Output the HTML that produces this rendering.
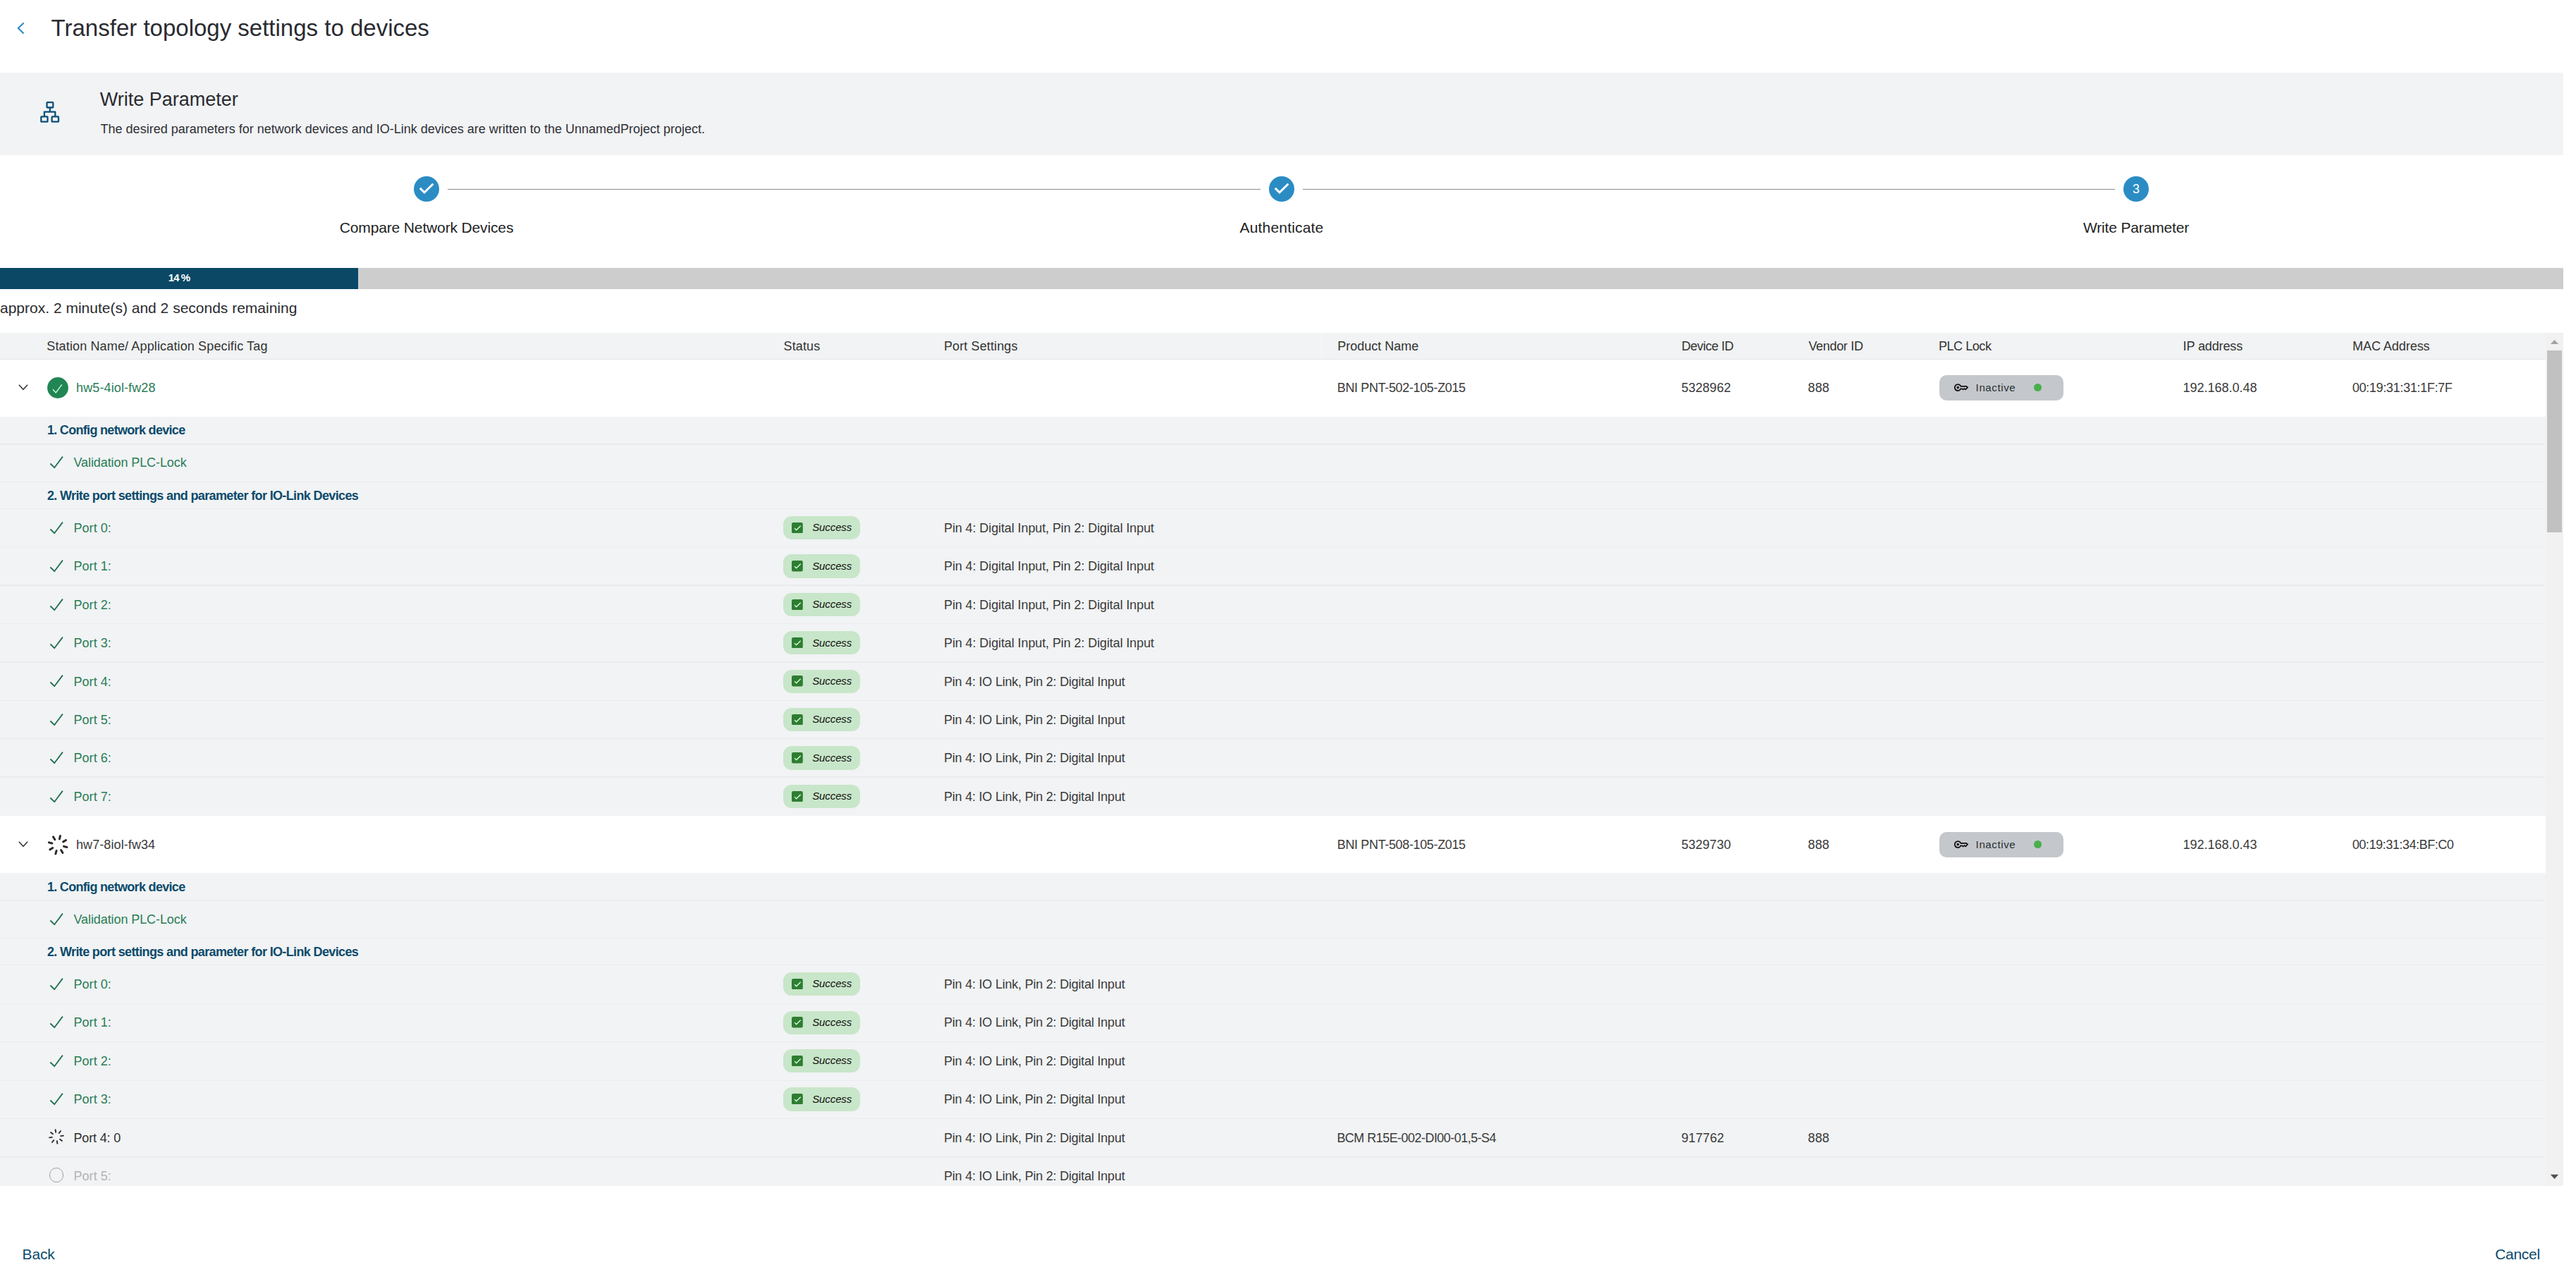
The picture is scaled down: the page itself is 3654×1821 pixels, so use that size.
<!DOCTYPE html>
<html lang="en"><head><meta charset="utf-8"><title>Transfer topology settings to devices</title>
<style>
html,body{margin:0;padding:0;background:#fff}
body{width:3654px;height:1821px;position:relative;overflow:hidden;font-family:"Liberation Sans", sans-serif;color:#333}
.a{position:absolute;display:block}
.t{position:absolute;white-space:nowrap;display:block}
.sep{left:0;width:3609px;height:1.4px;background:#e9ebee}
.plc{width:176px;height:36px;border-radius:10px;background:#c4c8cc}
.dot{width:11px;height:11px;border-radius:50%;background:#48b04c}
.suc{width:108.5px;height:33.3px;border-radius:12px;background:#c8e6c9}
.radio{width:20.6px;height:20.6px;border-radius:50%;border:1.3px solid #a0a0a0;box-sizing:border-box}
</style></head>
<body>
<svg class="a" style="left:18.7px;top:28px" width="24" height="24" viewBox="0 0 24 24"><path d="M14.6 4.4 L6.8 12 L14.6 19.6" fill="none" stroke="#2b8cc4" stroke-width="2.1"/></svg>
<span class="t" style="top:18.10px;height:44px;line-height:44px;font-size:33px;color:#2a2b31;left:72.60px;">Transfer topology settings to devices</span>
<div class="a" style="left:0;top:103px;width:3636px;height:117px;background:#f1f3f4"></div>
<svg class="a" style="left:55px;top:142px" width="32" height="34" viewBox="55 142 32 34"><g fill="none" stroke="#0b4f78" stroke-width="2.3" stroke-linejoin="round"><rect x="66.5" y="145.1" width="8.8" height="7.4" rx="0.8"/><rect x="58.3" y="165.4" width="9.2" height="7.3" rx="0.8"/><rect x="73.6" y="165.4" width="9.4" height="7.3" rx="0.8"/><path d="M70.9 152.5 V158.6 M62.9 165.4 V158.6 H78.3 V165.4"/></g></svg>
<span class="t" style="top:122.90px;height:36px;line-height:36px;font-size:27px;color:#2a2b31;left:141.80px;">Write Parameter</span>
<span class="t" style="top:168.10px;height:30px;line-height:30px;font-size:18px;color:#2f3036;left:142.60px;">The desired parameters for network devices and IO-Link devices are written to the UnnamedProject project.</span>
<div class="a" style="left:635px;top:267.6px;width:1153px;height:1.5px;background:#8c8c8c"></div>
<div class="a" style="left:1848px;top:267.6px;width:1152px;height:1.5px;background:#8c8c8c"></div>
<div class="a" style="left:587px;top:250px;width:36px;height:36px;border-radius:50%;background:#2b8cc4"></div>
<svg class="a" style="left:593px;top:256px" width="24" height="24" viewBox="0 0 24 24"><path d="M2.8 10.9 L9 17 L21.35 4.8" fill="none" stroke="#fff" stroke-width="3"/></svg>
<span class="t" style="top:307.60px;height:30px;line-height:30px;font-size:21px;letter-spacing:-0.139px;color:#1e1f24;left:205.00px;width:800px;text-align:center;">Compare Network Devices</span>
<div class="a" style="left:1800px;top:250px;width:36px;height:36px;border-radius:50%;background:#2b8cc4"></div>
<svg class="a" style="left:1806px;top:256px" width="24" height="24" viewBox="0 0 24 24"><path d="M2.8 10.9 L9 17 L21.35 4.8" fill="none" stroke="#fff" stroke-width="3"/></svg>
<span class="t" style="top:307.60px;height:30px;line-height:30px;font-size:21px;letter-spacing:0.176px;color:#1e1f24;left:1418.00px;width:800px;text-align:center;">Authenticate</span>
<div class="a" style="left:3012px;top:250px;width:36px;height:36px;border-radius:50%;background:#2b8cc4"></div>
<span class="t" style="top:252.80px;height:30px;line-height:30px;font-size:18px;color:#fff;left:2630.00px;width:800px;text-align:center;">3</span>
<span class="t" style="top:307.60px;height:30px;line-height:30px;font-size:21px;letter-spacing:-0.164px;color:#1e1f24;left:2630.00px;width:800px;text-align:center;">Write Parameter</span>
<div class="a" style="left:0;top:380px;width:3636px;height:30px;background:#cdcdcd"></div>
<div class="a" style="left:0;top:380px;width:508px;height:30px;background:#0a4866"></div>
<span class="t" style="top:379.40px;height:30px;line-height:30px;font-size:15px;font-weight:bold;letter-spacing:-0.901px;color:#fff;left:-146.00px;width:800px;text-align:center;">14 %</span>
<span class="t" style="top:421.80px;height:30px;line-height:30px;font-size:21px;color:#2a2b31;left:0.00px;">approx. 2 minute(s) and 2 seconds remaining</span>
<span class="t" style="top:1763.80px;height:30px;line-height:30px;font-size:21px;letter-spacing:-0.196px;color:#0b4a6b;left:31.60px;">Back</span>
<span class="t" style="top:1763.80px;height:30px;line-height:30px;font-size:21px;letter-spacing:-0.295px;color:#0b4a6b;left:3539.20px;">Cancel</span>
<div class="a" style="left:0;top:472px;width:3636px;height:1210px;background:#f1f3f4;overflow:hidden" id="tbl">
<div class="a" style="left:0;top:-472px;width:3636px;height:1821px">
<span class="t" style="top:475.80px;height:30px;line-height:30px;font-size:18px;letter-spacing:0.142px;color:#333;left:66.30px;">Station Name/ Application Specific Tag</span>
<span class="t" style="top:475.80px;height:30px;line-height:30px;font-size:18px;letter-spacing:0.114px;color:#333;left:1111.60px;">Status</span>
<span class="t" style="top:475.80px;height:30px;line-height:30px;font-size:18px;letter-spacing:0.111px;color:#333;left:1339.00px;">Port Settings</span>
<span class="t" style="top:475.80px;height:30px;line-height:30px;font-size:18px;letter-spacing:0.013px;color:#333;left:1897.20px;">Product Name</span>
<span class="t" style="top:475.80px;height:30px;line-height:30px;font-size:18px;letter-spacing:-0.491px;color:#333;left:2385.20px;">Device ID</span>
<span class="t" style="top:475.80px;height:30px;line-height:30px;font-size:18px;letter-spacing:-0.32px;color:#333;left:2565.40px;">Vendor ID</span>
<span class="t" style="top:475.80px;height:30px;line-height:30px;font-size:18px;letter-spacing:-0.45px;color:#333;left:2750.00px;">PLC Lock</span>
<span class="t" style="top:475.80px;height:30px;line-height:30px;font-size:18px;letter-spacing:-0.126px;color:#333;left:3096.60px;">IP address</span>
<span class="t" style="top:475.80px;height:30px;line-height:30px;font-size:18px;letter-spacing:-0.045px;color:#333;left:3337.00px;">MAC Address</span>
<div class="a" style="left:0;top:509.00px;width:3612px;height:1.5px;background:#e4e6e9"></div>
<div class="a" style="left:1873.5px;top:472.00px;width:1.5px;height:37px;background:#fafbfb"></div>
<div class="a" style="left:0;top:510.00px;width:3612px;height:81.00px;background:#fff"></div>
<svg class="a" style="left:23.10px;top:539.30px" width="20" height="20" viewBox="-10 -10 20 20"><path d="M-6.1 -3.2 L0 3.4 L6.1 -3.2" fill="none" stroke="#3a3a3a" stroke-width="1.6"/></svg>
<svg class="a" style="left:66px;top:533.90px" width="32" height="32" viewBox="-16 -16 32 32"><circle r="14.9" fill="#218654"/><path d="M-7.05 2.3 L-2.8 7 L5.8 -4.7" fill="none" stroke="#c9ffe4" stroke-width="1.4"/></svg>
<span class="t" style="top:534.60px;height:30px;line-height:30px;font-size:18px;letter-spacing:0.12px;color:#2a7d57;left:108.00px;">hw5-4iol-fw28</span>
<span class="t" style="top:534.60px;height:30px;line-height:30px;font-size:18px;letter-spacing:-0.358px;color:#3a3a3a;left:1896.80px;">BNI PNT-502-105-Z015</span>
<span class="t" style="top:534.60px;height:30px;line-height:30px;font-size:18px;letter-spacing:0.02px;color:#3a3a3a;left:2385.00px;">5328962</span>
<span class="t" style="top:534.60px;height:30px;line-height:30px;font-size:18px;letter-spacing:0.077px;color:#3a3a3a;left:2564.60px;">888</span>
<div class="a plc" style="left:2751px;top:532.00px"></div>
<svg class="a" style="left:2770.61px;top:539.38px" width="23.24" height="21.24" viewBox="0 0 26.260 24"><path d="M7 14q-.825 0-1.412-.587Q5 12.825 5 12t.588-1.413Q6.175 10 7 10t1.412.587Q9 11.175 9 12q0 .825-.588 1.413Q7.825 14 7 14Zm0 4q-2.5 0-4.25-1.75T1 12q0-2.5 1.75-4.25T7 6q1.675 0 3.038.825Q11.4 7.65 12.2 9H21l3 3-4.5 4.5-2-1.5-2 1.5L13.375 15H12.2q-.8 1.35-2.162 2.175Q8.675 18 7 18Zm0-2q1.4 0 2.463-.85Q10.525 14.3 10.875 13H14l1.45 1.025L17.5 12.5l1.775 1.375L21.15 12l-1-1h-9.275q-.35-1.3-1.412-2.15Q8.4 8 7 8 5.35 8 4.175 9.175 3 10.35 3 12q0 1.65 1.175 2.825Q5.35 16 7 16Z" fill="#111"/></svg>
<span class="t" style="top:534.70px;height:30px;line-height:30px;font-size:15px;letter-spacing:0.614px;color:#2a2e33;left:2802.60px;">Inactive</span>
<div class="a dot" style="left:2884.80px;top:544.30px"></div>
<span class="t" style="top:534.60px;height:30px;line-height:30px;font-size:18px;letter-spacing:-0.001px;color:#3a3a3a;left:3096.40px;">192.168.0.48</span>
<span class="t" style="top:534.60px;height:30px;line-height:30px;font-size:18px;letter-spacing:-0.313px;color:#3a3a3a;left:3336.70px;">00:19:31:31:1F:7F</span>
<span class="t" style="top:594.50px;height:30px;line-height:30px;font-size:18px;font-weight:bold;letter-spacing:-0.685px;color:#0b4a6b;left:66.90px;">1. Config network device</span>
<div class="a sep" style="top:629.20px"></div>
<svg class="a" style="left:68.00px;top:643.60px" width="24" height="24" viewBox="-12 -12 24 24"><path d="M-8.6 1.5 L-2.8 7.2 L8.9 -8.4" fill="none" stroke="#1f6e4c" stroke-width="1.8" stroke-linejoin="miter"/></svg>
<span class="t" style="top:640.85px;height:30px;line-height:30px;font-size:18px;letter-spacing:-0.087px;color:#2a7d57;left:104.50px;">Validation PLC-Lock</span>
<div class="a sep" style="top:682.90px"></div>
<span class="t" style="top:687.80px;height:30px;line-height:30px;font-size:18px;font-weight:bold;letter-spacing:-0.634px;color:#0b4a6b;left:66.90px;">2. Write port settings and parameter for IO-Link Devices</span>
<div class="a sep" style="top:721.10px"></div>
<svg class="a" style="left:68.00px;top:736.70px" width="24" height="24" viewBox="-12 -12 24 24"><path d="M-8.6 1.5 L-2.8 7.2 L8.9 -8.4" fill="none" stroke="#1f6e4c" stroke-width="1.8" stroke-linejoin="miter"/></svg>
<span class="t" style="top:733.95px;height:30px;line-height:30px;font-size:18px;letter-spacing:0.045px;color:#2a7d57;left:104.50px;">Port 0:</span>
<div class="a suc" style="left:1111px;top:732.00px"></div>
<svg class="a" style="left:1123.3px;top:740.80px" width="15.8" height="15.4" viewBox="0 0 15.8 15.4"><rect width="15.8" height="15.4" rx="2.2" fill="#2e7d32"/><path d="M4.1 8.1 L6.6 10.8 L12.7 4.8" fill="none" stroke="#d6ffdc" stroke-width="1.35"/></svg>
<span class="t" style="top:733.30px;height:30px;line-height:30px;font-size:15px;font-style:italic;letter-spacing:-0.101px;color:#111;left:1152.20px;">Success</span>
<span class="t" style="top:733.95px;height:30px;line-height:30px;font-size:18px;letter-spacing:-0.099px;color:#3a3a3a;left:1339.00px;">Pin 4: Digital Input, Pin 2: Digital Input</span>
<div class="a sep" style="top:775.00px"></div>
<svg class="a" style="left:68.00px;top:791.10px" width="24" height="24" viewBox="-12 -12 24 24"><path d="M-8.6 1.5 L-2.8 7.2 L8.9 -8.4" fill="none" stroke="#1f6e4c" stroke-width="1.8" stroke-linejoin="miter"/></svg>
<span class="t" style="top:788.35px;height:30px;line-height:30px;font-size:18px;letter-spacing:0.045px;color:#2a7d57;left:104.50px;">Port 1:</span>
<div class="a suc" style="left:1111px;top:786.40px"></div>
<svg class="a" style="left:1123.3px;top:795.20px" width="15.8" height="15.4" viewBox="0 0 15.8 15.4"><rect width="15.8" height="15.4" rx="2.2" fill="#2e7d32"/><path d="M4.1 8.1 L6.6 10.8 L12.7 4.8" fill="none" stroke="#d6ffdc" stroke-width="1.35"/></svg>
<span class="t" style="top:787.70px;height:30px;line-height:30px;font-size:15px;font-style:italic;letter-spacing:-0.101px;color:#111;left:1152.20px;">Success</span>
<span class="t" style="top:788.35px;height:30px;line-height:30px;font-size:18px;letter-spacing:-0.099px;color:#3a3a3a;left:1339.00px;">Pin 4: Digital Input, Pin 2: Digital Input</span>
<div class="a sep" style="top:829.40px"></div>
<svg class="a" style="left:68.00px;top:845.50px" width="24" height="24" viewBox="-12 -12 24 24"><path d="M-8.6 1.5 L-2.8 7.2 L8.9 -8.4" fill="none" stroke="#1f6e4c" stroke-width="1.8" stroke-linejoin="miter"/></svg>
<span class="t" style="top:842.75px;height:30px;line-height:30px;font-size:18px;letter-spacing:0.045px;color:#2a7d57;left:104.50px;">Port 2:</span>
<div class="a suc" style="left:1111px;top:840.80px"></div>
<svg class="a" style="left:1123.3px;top:849.60px" width="15.8" height="15.4" viewBox="0 0 15.8 15.4"><rect width="15.8" height="15.4" rx="2.2" fill="#2e7d32"/><path d="M4.1 8.1 L6.6 10.8 L12.7 4.8" fill="none" stroke="#d6ffdc" stroke-width="1.35"/></svg>
<span class="t" style="top:842.10px;height:30px;line-height:30px;font-size:15px;font-style:italic;letter-spacing:-0.101px;color:#111;left:1152.20px;">Success</span>
<span class="t" style="top:842.75px;height:30px;line-height:30px;font-size:18px;letter-spacing:-0.099px;color:#3a3a3a;left:1339.00px;">Pin 4: Digital Input, Pin 2: Digital Input</span>
<div class="a sep" style="top:883.80px"></div>
<svg class="a" style="left:68.00px;top:899.90px" width="24" height="24" viewBox="-12 -12 24 24"><path d="M-8.6 1.5 L-2.8 7.2 L8.9 -8.4" fill="none" stroke="#1f6e4c" stroke-width="1.8" stroke-linejoin="miter"/></svg>
<span class="t" style="top:897.15px;height:30px;line-height:30px;font-size:18px;letter-spacing:0.045px;color:#2a7d57;left:104.50px;">Port 3:</span>
<div class="a suc" style="left:1111px;top:895.20px"></div>
<svg class="a" style="left:1123.3px;top:904.00px" width="15.8" height="15.4" viewBox="0 0 15.8 15.4"><rect width="15.8" height="15.4" rx="2.2" fill="#2e7d32"/><path d="M4.1 8.1 L6.6 10.8 L12.7 4.8" fill="none" stroke="#d6ffdc" stroke-width="1.35"/></svg>
<span class="t" style="top:896.50px;height:30px;line-height:30px;font-size:15px;font-style:italic;letter-spacing:-0.101px;color:#111;left:1152.20px;">Success</span>
<span class="t" style="top:897.15px;height:30px;line-height:30px;font-size:18px;letter-spacing:-0.099px;color:#3a3a3a;left:1339.00px;">Pin 4: Digital Input, Pin 2: Digital Input</span>
<div class="a sep" style="top:938.20px"></div>
<svg class="a" style="left:68.00px;top:954.30px" width="24" height="24" viewBox="-12 -12 24 24"><path d="M-8.6 1.5 L-2.8 7.2 L8.9 -8.4" fill="none" stroke="#1f6e4c" stroke-width="1.8" stroke-linejoin="miter"/></svg>
<span class="t" style="top:951.55px;height:30px;line-height:30px;font-size:18px;letter-spacing:0.045px;color:#2a7d57;left:104.50px;">Port 4:</span>
<div class="a suc" style="left:1111px;top:949.60px"></div>
<svg class="a" style="left:1123.3px;top:958.40px" width="15.8" height="15.4" viewBox="0 0 15.8 15.4"><rect width="15.8" height="15.4" rx="2.2" fill="#2e7d32"/><path d="M4.1 8.1 L6.6 10.8 L12.7 4.8" fill="none" stroke="#d6ffdc" stroke-width="1.35"/></svg>
<span class="t" style="top:950.90px;height:30px;line-height:30px;font-size:15px;font-style:italic;letter-spacing:-0.101px;color:#111;left:1152.20px;">Success</span>
<span class="t" style="top:951.55px;height:30px;line-height:30px;font-size:18px;letter-spacing:-0.213px;color:#3a3a3a;left:1339.00px;">Pin 4: IO Link, Pin 2: Digital Input</span>
<div class="a sep" style="top:992.60px"></div>
<svg class="a" style="left:68.00px;top:1008.70px" width="24" height="24" viewBox="-12 -12 24 24"><path d="M-8.6 1.5 L-2.8 7.2 L8.9 -8.4" fill="none" stroke="#1f6e4c" stroke-width="1.8" stroke-linejoin="miter"/></svg>
<span class="t" style="top:1005.95px;height:30px;line-height:30px;font-size:18px;letter-spacing:0.045px;color:#2a7d57;left:104.50px;">Port 5:</span>
<div class="a suc" style="left:1111px;top:1004.00px"></div>
<svg class="a" style="left:1123.3px;top:1012.80px" width="15.8" height="15.4" viewBox="0 0 15.8 15.4"><rect width="15.8" height="15.4" rx="2.2" fill="#2e7d32"/><path d="M4.1 8.1 L6.6 10.8 L12.7 4.8" fill="none" stroke="#d6ffdc" stroke-width="1.35"/></svg>
<span class="t" style="top:1005.30px;height:30px;line-height:30px;font-size:15px;font-style:italic;letter-spacing:-0.101px;color:#111;left:1152.20px;">Success</span>
<span class="t" style="top:1005.95px;height:30px;line-height:30px;font-size:18px;letter-spacing:-0.213px;color:#3a3a3a;left:1339.00px;">Pin 4: IO Link, Pin 2: Digital Input</span>
<div class="a sep" style="top:1047.00px"></div>
<svg class="a" style="left:68.00px;top:1063.10px" width="24" height="24" viewBox="-12 -12 24 24"><path d="M-8.6 1.5 L-2.8 7.2 L8.9 -8.4" fill="none" stroke="#1f6e4c" stroke-width="1.8" stroke-linejoin="miter"/></svg>
<span class="t" style="top:1060.35px;height:30px;line-height:30px;font-size:18px;letter-spacing:0.045px;color:#2a7d57;left:104.50px;">Port 6:</span>
<div class="a suc" style="left:1111px;top:1058.40px"></div>
<svg class="a" style="left:1123.3px;top:1067.20px" width="15.8" height="15.4" viewBox="0 0 15.8 15.4"><rect width="15.8" height="15.4" rx="2.2" fill="#2e7d32"/><path d="M4.1 8.1 L6.6 10.8 L12.7 4.8" fill="none" stroke="#d6ffdc" stroke-width="1.35"/></svg>
<span class="t" style="top:1059.70px;height:30px;line-height:30px;font-size:15px;font-style:italic;letter-spacing:-0.101px;color:#111;left:1152.20px;">Success</span>
<span class="t" style="top:1060.35px;height:30px;line-height:30px;font-size:18px;letter-spacing:-0.213px;color:#3a3a3a;left:1339.00px;">Pin 4: IO Link, Pin 2: Digital Input</span>
<div class="a sep" style="top:1101.40px"></div>
<svg class="a" style="left:68.00px;top:1117.50px" width="24" height="24" viewBox="-12 -12 24 24"><path d="M-8.6 1.5 L-2.8 7.2 L8.9 -8.4" fill="none" stroke="#1f6e4c" stroke-width="1.8" stroke-linejoin="miter"/></svg>
<span class="t" style="top:1114.75px;height:30px;line-height:30px;font-size:18px;letter-spacing:0.045px;color:#2a7d57;left:104.50px;">Port 7:</span>
<div class="a suc" style="left:1111px;top:1112.80px"></div>
<svg class="a" style="left:1123.3px;top:1121.60px" width="15.8" height="15.4" viewBox="0 0 15.8 15.4"><rect width="15.8" height="15.4" rx="2.2" fill="#2e7d32"/><path d="M4.1 8.1 L6.6 10.8 L12.7 4.8" fill="none" stroke="#d6ffdc" stroke-width="1.35"/></svg>
<span class="t" style="top:1114.10px;height:30px;line-height:30px;font-size:15px;font-style:italic;letter-spacing:-0.101px;color:#111;left:1152.20px;">Success</span>
<span class="t" style="top:1114.75px;height:30px;line-height:30px;font-size:18px;letter-spacing:-0.213px;color:#3a3a3a;left:1339.00px;">Pin 4: IO Link, Pin 2: Digital Input</span>
<div class="a" style="left:0;top:1156.70px;width:3612px;height:81.30px;background:#fff"></div>
<svg class="a" style="left:23.10px;top:1187.30px" width="20" height="20" viewBox="-10 -10 20 20"><path d="M-6.1 -3.2 L0 3.4 L6.1 -3.2" fill="none" stroke="#3a3a3a" stroke-width="1.6"/></svg>
<svg class="a" style="left:65.80px;top:1181.70px" width="32.4" height="32.4" viewBox="-16.2 -16.2 32.4 32.4"><g stroke="#2b2b2b" stroke-width="3.0" stroke-linecap="round"><line x1="2.15" y1="-8.33" x2="3.31" y2="-12.78"/><line x1="7.41" y1="-4.36" x2="11.37" y2="-6.70"/><line x1="8.33" y1="2.15" x2="12.78" y2="3.31"/><line x1="4.36" y1="7.41" x2="6.70" y2="11.37"/><line x1="-2.15" y1="8.33" x2="-3.31" y2="12.78"/><line x1="-7.41" y1="4.36" x2="-11.37" y2="6.70"/><line x1="-8.33" y1="-2.15" x2="-12.78" y2="-3.31"/><line x1="-4.36" y1="-7.41" x2="-6.70" y2="-11.37"/></g></svg>
<span class="t" style="top:1182.60px;height:30px;line-height:30px;font-size:18px;letter-spacing:0.086px;color:#3a3a3a;left:108.00px;">hw7-8iol-fw34</span>
<span class="t" style="top:1182.60px;height:30px;line-height:30px;font-size:18px;letter-spacing:-0.358px;color:#3a3a3a;left:1896.80px;">BNI PNT-508-105-Z015</span>
<span class="t" style="top:1182.60px;height:30px;line-height:30px;font-size:18px;letter-spacing:0.02px;color:#3a3a3a;left:2385.00px;">5329730</span>
<span class="t" style="top:1182.60px;height:30px;line-height:30px;font-size:18px;letter-spacing:0.077px;color:#3a3a3a;left:2564.60px;">888</span>
<div class="a plc" style="left:2751px;top:1180.00px"></div>
<svg class="a" style="left:2770.61px;top:1187.38px" width="23.24" height="21.24" viewBox="0 0 26.260 24"><path d="M7 14q-.825 0-1.412-.587Q5 12.825 5 12t.588-1.413Q6.175 10 7 10t1.412.587Q9 11.175 9 12q0 .825-.588 1.413Q7.825 14 7 14Zm0 4q-2.5 0-4.25-1.75T1 12q0-2.5 1.75-4.25T7 6q1.675 0 3.038.825Q11.4 7.65 12.2 9H21l3 3-4.5 4.5-2-1.5-2 1.5L13.375 15H12.2q-.8 1.35-2.162 2.175Q8.675 18 7 18Zm0-2q1.4 0 2.463-.85Q10.525 14.3 10.875 13H14l1.45 1.025L17.5 12.5l1.775 1.375L21.15 12l-1-1h-9.275q-.35-1.3-1.412-2.15Q8.4 8 7 8 5.35 8 4.175 9.175 3 10.35 3 12q0 1.65 1.175 2.825Q5.35 16 7 16Z" fill="#111"/></svg>
<span class="t" style="top:1182.70px;height:30px;line-height:30px;font-size:15px;letter-spacing:0.614px;color:#2a2e33;left:2802.60px;">Inactive</span>
<div class="a dot" style="left:2884.80px;top:1192.30px"></div>
<span class="t" style="top:1182.60px;height:30px;line-height:30px;font-size:18px;letter-spacing:-0.001px;color:#3a3a3a;left:3096.40px;">192.168.0.43</span>
<span class="t" style="top:1182.60px;height:30px;line-height:30px;font-size:18px;letter-spacing:-0.432px;color:#3a3a3a;left:3336.70px;">00:19:31:34:BF:C0</span>
<span class="t" style="top:1242.80px;height:30px;line-height:30px;font-size:18px;font-weight:bold;letter-spacing:-0.685px;color:#0b4a6b;left:66.90px;">1. Config network device</span>
<div class="a sep" style="top:1276.30px"></div>
<svg class="a" style="left:68.00px;top:1292.10px" width="24" height="24" viewBox="-12 -12 24 24"><path d="M-8.6 1.5 L-2.8 7.2 L8.9 -8.4" fill="none" stroke="#1f6e4c" stroke-width="1.8" stroke-linejoin="miter"/></svg>
<span class="t" style="top:1289.35px;height:30px;line-height:30px;font-size:18px;letter-spacing:-0.087px;color:#2a7d57;left:104.50px;">Validation PLC-Lock</span>
<div class="a sep" style="top:1330.10px"></div>
<span class="t" style="top:1334.80px;height:30px;line-height:30px;font-size:18px;font-weight:bold;letter-spacing:-0.634px;color:#0b4a6b;left:66.90px;">2. Write port settings and parameter for IO-Link Devices</span>
<div class="a sep" style="top:1367.90px"></div>
<svg class="a" style="left:68.00px;top:1383.80px" width="24" height="24" viewBox="-12 -12 24 24"><path d="M-8.6 1.5 L-2.8 7.2 L8.9 -8.4" fill="none" stroke="#1f6e4c" stroke-width="1.8" stroke-linejoin="miter"/></svg>
<span class="t" style="top:1381.05px;height:30px;line-height:30px;font-size:18px;letter-spacing:0.045px;color:#2a7d57;left:104.50px;">Port 0:</span>
<div class="a suc" style="left:1111px;top:1379.10px"></div>
<svg class="a" style="left:1123.3px;top:1387.90px" width="15.8" height="15.4" viewBox="0 0 15.8 15.4"><rect width="15.8" height="15.4" rx="2.2" fill="#2e7d32"/><path d="M4.1 8.1 L6.6 10.8 L12.7 4.8" fill="none" stroke="#d6ffdc" stroke-width="1.35"/></svg>
<span class="t" style="top:1380.40px;height:30px;line-height:30px;font-size:15px;font-style:italic;letter-spacing:-0.101px;color:#111;left:1152.20px;">Success</span>
<span class="t" style="top:1381.05px;height:30px;line-height:30px;font-size:18px;letter-spacing:-0.213px;color:#3a3a3a;left:1339.00px;">Pin 4: IO Link, Pin 2: Digital Input</span>
<div class="a sep" style="top:1422.70px"></div>
<svg class="a" style="left:68.00px;top:1438.20px" width="24" height="24" viewBox="-12 -12 24 24"><path d="M-8.6 1.5 L-2.8 7.2 L8.9 -8.4" fill="none" stroke="#1f6e4c" stroke-width="1.8" stroke-linejoin="miter"/></svg>
<span class="t" style="top:1435.45px;height:30px;line-height:30px;font-size:18px;letter-spacing:0.045px;color:#2a7d57;left:104.50px;">Port 1:</span>
<div class="a suc" style="left:1111px;top:1433.50px"></div>
<svg class="a" style="left:1123.3px;top:1442.30px" width="15.8" height="15.4" viewBox="0 0 15.8 15.4"><rect width="15.8" height="15.4" rx="2.2" fill="#2e7d32"/><path d="M4.1 8.1 L6.6 10.8 L12.7 4.8" fill="none" stroke="#d6ffdc" stroke-width="1.35"/></svg>
<span class="t" style="top:1434.80px;height:30px;line-height:30px;font-size:15px;font-style:italic;letter-spacing:-0.101px;color:#111;left:1152.20px;">Success</span>
<span class="t" style="top:1435.45px;height:30px;line-height:30px;font-size:18px;letter-spacing:-0.213px;color:#3a3a3a;left:1339.00px;">Pin 4: IO Link, Pin 2: Digital Input</span>
<div class="a sep" style="top:1477.10px"></div>
<svg class="a" style="left:68.00px;top:1492.60px" width="24" height="24" viewBox="-12 -12 24 24"><path d="M-8.6 1.5 L-2.8 7.2 L8.9 -8.4" fill="none" stroke="#1f6e4c" stroke-width="1.8" stroke-linejoin="miter"/></svg>
<span class="t" style="top:1489.85px;height:30px;line-height:30px;font-size:18px;letter-spacing:0.045px;color:#2a7d57;left:104.50px;">Port 2:</span>
<div class="a suc" style="left:1111px;top:1487.90px"></div>
<svg class="a" style="left:1123.3px;top:1496.70px" width="15.8" height="15.4" viewBox="0 0 15.8 15.4"><rect width="15.8" height="15.4" rx="2.2" fill="#2e7d32"/><path d="M4.1 8.1 L6.6 10.8 L12.7 4.8" fill="none" stroke="#d6ffdc" stroke-width="1.35"/></svg>
<span class="t" style="top:1489.20px;height:30px;line-height:30px;font-size:15px;font-style:italic;letter-spacing:-0.101px;color:#111;left:1152.20px;">Success</span>
<span class="t" style="top:1489.85px;height:30px;line-height:30px;font-size:18px;letter-spacing:-0.213px;color:#3a3a3a;left:1339.00px;">Pin 4: IO Link, Pin 2: Digital Input</span>
<div class="a sep" style="top:1531.50px"></div>
<svg class="a" style="left:68.00px;top:1547.00px" width="24" height="24" viewBox="-12 -12 24 24"><path d="M-8.6 1.5 L-2.8 7.2 L8.9 -8.4" fill="none" stroke="#1f6e4c" stroke-width="1.8" stroke-linejoin="miter"/></svg>
<span class="t" style="top:1544.25px;height:30px;line-height:30px;font-size:18px;letter-spacing:0.045px;color:#2a7d57;left:104.50px;">Port 3:</span>
<div class="a suc" style="left:1111px;top:1542.30px"></div>
<svg class="a" style="left:1123.3px;top:1551.10px" width="15.8" height="15.4" viewBox="0 0 15.8 15.4"><rect width="15.8" height="15.4" rx="2.2" fill="#2e7d32"/><path d="M4.1 8.1 L6.6 10.8 L12.7 4.8" fill="none" stroke="#d6ffdc" stroke-width="1.35"/></svg>
<span class="t" style="top:1543.60px;height:30px;line-height:30px;font-size:15px;font-style:italic;letter-spacing:-0.101px;color:#111;left:1152.20px;">Success</span>
<span class="t" style="top:1544.25px;height:30px;line-height:30px;font-size:18px;letter-spacing:-0.213px;color:#3a3a3a;left:1339.00px;">Pin 4: IO Link, Pin 2: Digital Input</span>
<div class="a sep" style="top:1585.90px"></div>
<svg class="a" style="left:67.20px;top:1599.40px" width="26.0" height="26.0" viewBox="-13.0 -13.0 26.0 26.0"><g stroke="#2b2b2b" stroke-width="1.9" stroke-linecap="round"><line x1="-0.86" y1="-6.14" x2="-1.39" y2="-9.90"/><line x1="3.73" y1="-4.95" x2="6.02" y2="-7.99"/><line x1="6.14" y1="-0.86" x2="9.90" y2="-1.39"/><line x1="4.95" y1="3.73" x2="7.99" y2="6.02"/><line x1="0.86" y1="6.14" x2="1.39" y2="9.90"/><line x1="-3.73" y1="4.95" x2="-6.02" y2="7.99"/><line x1="-6.14" y1="0.86" x2="-9.90" y2="1.39"/><line x1="-4.95" y1="-3.73" x2="-7.99" y2="-6.02"/></g></svg>
<span class="t" style="top:1598.65px;height:30px;line-height:30px;font-size:18px;letter-spacing:-0.156px;color:#2f2f2f;left:104.50px;">Port 4: 0</span>
<span class="t" style="top:1598.65px;height:30px;line-height:30px;font-size:18px;letter-spacing:-0.213px;color:#3a3a3a;left:1339.00px;">Pin 4: IO Link, Pin 2: Digital Input</span>
<span class="t" style="top:1598.65px;height:30px;line-height:30px;font-size:18px;letter-spacing:-0.538px;color:#3a3a3a;left:1896.40px;">BCM R15E-002-DI00-01,5-S4</span>
<span class="t" style="top:1598.65px;height:30px;line-height:30px;font-size:18px;letter-spacing:0.084px;color:#3a3a3a;left:2385.00px;">917762</span>
<span class="t" style="top:1598.65px;height:30px;line-height:30px;font-size:18px;letter-spacing:0.077px;color:#3a3a3a;left:2564.60px;">888</span>
<div class="a sep" style="top:1640.30px"></div>
<div class="a radio" style="left:69.90px;top:1656.10px"></div>
<span class="t" style="top:1653.05px;height:30px;line-height:30px;font-size:18px;letter-spacing:0.045px;color:#b3b3b3;left:104.50px;">Port 5:</span>
<span class="t" style="top:1653.05px;height:30px;line-height:30px;font-size:18px;letter-spacing:-0.213px;color:#3a3a3a;left:1339.00px;">Pin 4: IO Link, Pin 2: Digital Input</span>
<div class="a" style="left:3611px;top:472px;width:25px;height:1210px;background:#f1f1f1"></div>
<div class="a" style="left:3613px;top:497px;width:21px;height:257.5px;background:#c1c1c1"></div>
<svg class="a" style="left:3617px;top:481px" width="13" height="8" viewBox="0 0 13 8"><path d="M0.8 7 L6.5 1 L12.2 7Z" fill="#a3a3a3"/></svg>
<svg class="a" style="left:3617px;top:1665px" width="13" height="8" viewBox="0 0 13 8"><path d="M0.8 0.8 L6.5 7 L12.2 0.8Z" fill="#505050"/></svg>
</div></div>
</body></html>
